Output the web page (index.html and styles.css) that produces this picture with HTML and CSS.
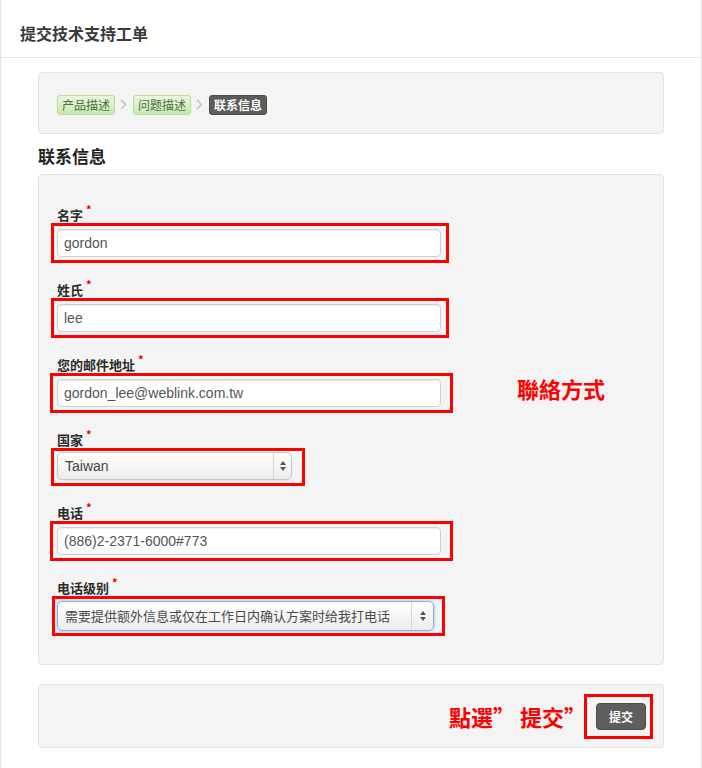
FILE: index.html
```html
<!DOCTYPE html>
<html lang="zh-CN">
<head>
<meta charset="utf-8">
<title>提交技术支持工单</title>
<link rel="stylesheet" href="styles.css">
</head>
<body>
<div class="page">
  <header class="page-head">
    <h1 class="page-title">提交技术支持工单</h1>
  </header>
  <main class="content">
    <div class="well steps">
      <span class="step step-done">产品描述</span>
      <svg class="chev" width="7" height="11" viewBox="0 0 7 11"><polyline points="1,1 5.5,5.5 1,10" fill="none" stroke="#c4c4c4" stroke-width="1.6"/></svg>
      <span class="step step-done">问题描述</span>
      <svg class="chev" width="7" height="11" viewBox="0 0 7 11"><polyline points="1,1 5.5,5.5 1,10" fill="none" stroke="#c4c4c4" stroke-width="1.6"/></svg>
      <span class="step step-active">联系信息</span>
    </div>

    <h2 class="section-title">联系信息</h2>

    <div class="well form">
      <div class="note note-contact">聯絡方式</div>
      <div class="field">
        <label class="label">名字<span class="req">*</span></label>
        <div class="mark"><div class="input">gordon</div></div>
      </div>
      <div class="field">
        <label class="label">姓氏<span class="req">*</span></label>
        <div class="mark"><div class="input">lee</div></div>
      </div>
      <div class="field">
        <label class="label">您的邮件地址<span class="req">*</span></label>
        <div class="mark mark-wide"><div class="input">gordon_lee@weblink.com.tw</div></div>
      </div>
      <div class="field">
        <label class="label">国家<span class="req">*</span></label>
        <div class="mark mark-select"><div class="select select-country"><span class="select-text">Taiwan</span><span class="select-arrows"><svg width="8" height="12" viewBox="0 0 8 12"><polygon points="4,1 7,5 1,5" fill="#555"/><polygon points="1,7 7,7 4,11" fill="#555"/></svg></span></div></div>
      </div>
      <div class="field">
        <label class="label">电话<span class="req">*</span></label>
        <div class="mark mark-wide"><div class="input">(886)2-2371-6000#773</div></div>
      </div>
      <div class="field field-last">
        <label class="label">电话级别<span class="req">*</span></label>
        <div class="mark mark-level"><div class="select select-level"><span class="select-text cjk">需要提供额外信息或仅在工作日内确认方案时给我打电话</span><span class="select-arrows"><svg width="8" height="12" viewBox="0 0 8 12"><polygon points="4,1 7,5 1,5" fill="#555"/><polygon points="1,7 7,7 4,11" fill="#555"/></svg></span></div></div>
      </div>
    </div>

    <div class="well actions">
      <span class="note note-submit">點選” 提交”</span>
      <div class="mark mark-button"><button class="btn" type="button">提交</button></div>
    </div>
  </main>
</div>
</body>
</html>
```

FILE: styles.css
```css
* { box-sizing: border-box; }

html, body {
  margin: 0;
  padding: 0;
  background: #ffffff;
}

body {
  font-family: "Noto Sans CJK SC", "Liberation Sans", sans-serif;
  color: #333;
}

.page {
  width: 702px;
  min-height: 768px;
  border-left: 1px solid #e4e4e4;
  border-right: 1px solid #e4e4e4;
}

.page-head {
  height: 58px;
  padding: 23px 0 0 19px;
  border-bottom: 1px solid #e6e6e6;
}

.page-title {
  margin: 0;
  font-size: 16px;
  line-height: 20px;
  font-weight: bold;
  color: #3a3a3a;
}

.content {
  padding: 14px 37px 0 37px;
}

.well {
  background: #f4f4f4;
  border: 1px solid #e3e3e3;
  border-radius: 4px;
}

/* breadcrumb steps */
.steps {
  display: flex;
  align-items: center;
  height: 62px;
  padding: 3px 18px 0 18px;
}

.step {
  display: inline-block;
  height: 20px;
  padding: 0 4px;
  font-size: 12px;
  line-height: 18px;
  border-radius: 3px;
  border: 1px solid transparent;
}

.step-done {
  color: #4e6f43;
  background: linear-gradient(#eaf8e0, #c6e9ad);
  border-color: #b7dc9e;
}

.step-active {
  color: #ffffff;
  font-weight: bold;
  background: #5c5c5c;
  border-color: #4d4d4d;
}

.chev {
  margin: 0 6px 0 5px;
}

.section-title {
  margin: 10px 0 6px 0;
  font-size: 17px;
  line-height: 24px;
  font-weight: bold;
  color: #222;
}

/* form */
.form {
  position: relative;
  padding: 32px 18px 28px 18px;
}

.field {
  margin-bottom: 19px;
}

.field-last {
  margin-bottom: 0;
}

.label {
  display: block;
  font-size: 13px;
  line-height: 16px;
  font-weight: bold;
  color: #2b2b2b;
}

.req {
  position: relative;
  top: -6px;
  margin-left: 3px;
  font-size: 11px;
  color: #e00000;
}

.mark {
  display: block;
  width: fit-content;
  margin-left: -6px;
  border: 3px solid #ff0000;
  padding: 3px 5px 3px 3px;
}

.mark-wide {
  margin-left: -7px;
  padding-right: 9px;
  padding-left: 4px;
}

.mark-select {
  padding: 1px 10px 3px 3px;
}

.mark-level {
  margin-left: -5px;
  padding: 2px 8px 2px 2px;
}

.input {
  width: 384px;
  height: 28px;
  padding: 0 6px;
  background: #ffffff;
  border: 1px solid #cfcfcf;
  border-radius: 4px;
  box-shadow: inset 0 1px 1px rgba(0, 0, 0, 0.07);
  font-family: "Liberation Sans", "Noto Sans CJK SC", sans-serif;
  font-size: 14px;
  line-height: 26px;
  color: #555;
}

.select {
  display: flex;
  align-items: stretch;
  height: 28px;
  border: 1px solid #c6c6c6;
  border-radius: 5px;
  background: linear-gradient(#ffffff, #ececec);
  box-shadow: 0 1px 1px rgba(0, 0, 0, 0.06);
  font-family: "Liberation Sans", "Noto Sans CJK SC", sans-serif;
  color: #444;
}

.select-country {
  width: 235px;
}

.select-level {
  width: 377px;
  height: 30px;
  border-color: #86b3e3;
  box-shadow: 0 0 3px rgba(82, 150, 230, 0.7);
}

.select-text {
  flex: 1;
  padding-left: 7px;
  font-size: 14px;
  line-height: 26px;
}

.select-level .select-text {
  font-size: 13px;
  line-height: 28px;
  font-family: "Noto Sans CJK SC", sans-serif;
  color: #4a4a4a;
}

.select-arrows {
  display: flex;
  align-items: center;
  justify-content: center;
  width: 18px;
  border-left: 1px solid #d6d6d6;
}

.select-level .select-arrows {
  width: 22px;
}

/* annotations */
.note {
  font-family: "Noto Sans CJK TC", "Noto Sans CJK SC", sans-serif;
  font-size: 22px;
  line-height: 26px;
  font-weight: bold;
  color: #ff0000;
}

.note-contact {
  position: absolute;
  left: 478px;
  top: 200px;
}

.actions {
  display: flex;
  justify-content: flex-end;
  align-items: center;
  margin-top: 19px;
  height: 64px;
  padding: 0 10px 0 0;
}

.note-submit {
  margin-right: -2px;
}

.mark-button {
  margin-left: 0;
  padding: 6px 4px 6px 9px;
}

.btn {
  display: block;
  width: 50px;
  height: 27px;
  padding: 0;
  border: 1px solid #4c4c4c;
  border-radius: 4px;
  background: #5e5e5e;
  color: #ffffff;
  font-family: "Noto Sans CJK SC", sans-serif;
  font-size: 12px;
  font-weight: bold;
}
```
